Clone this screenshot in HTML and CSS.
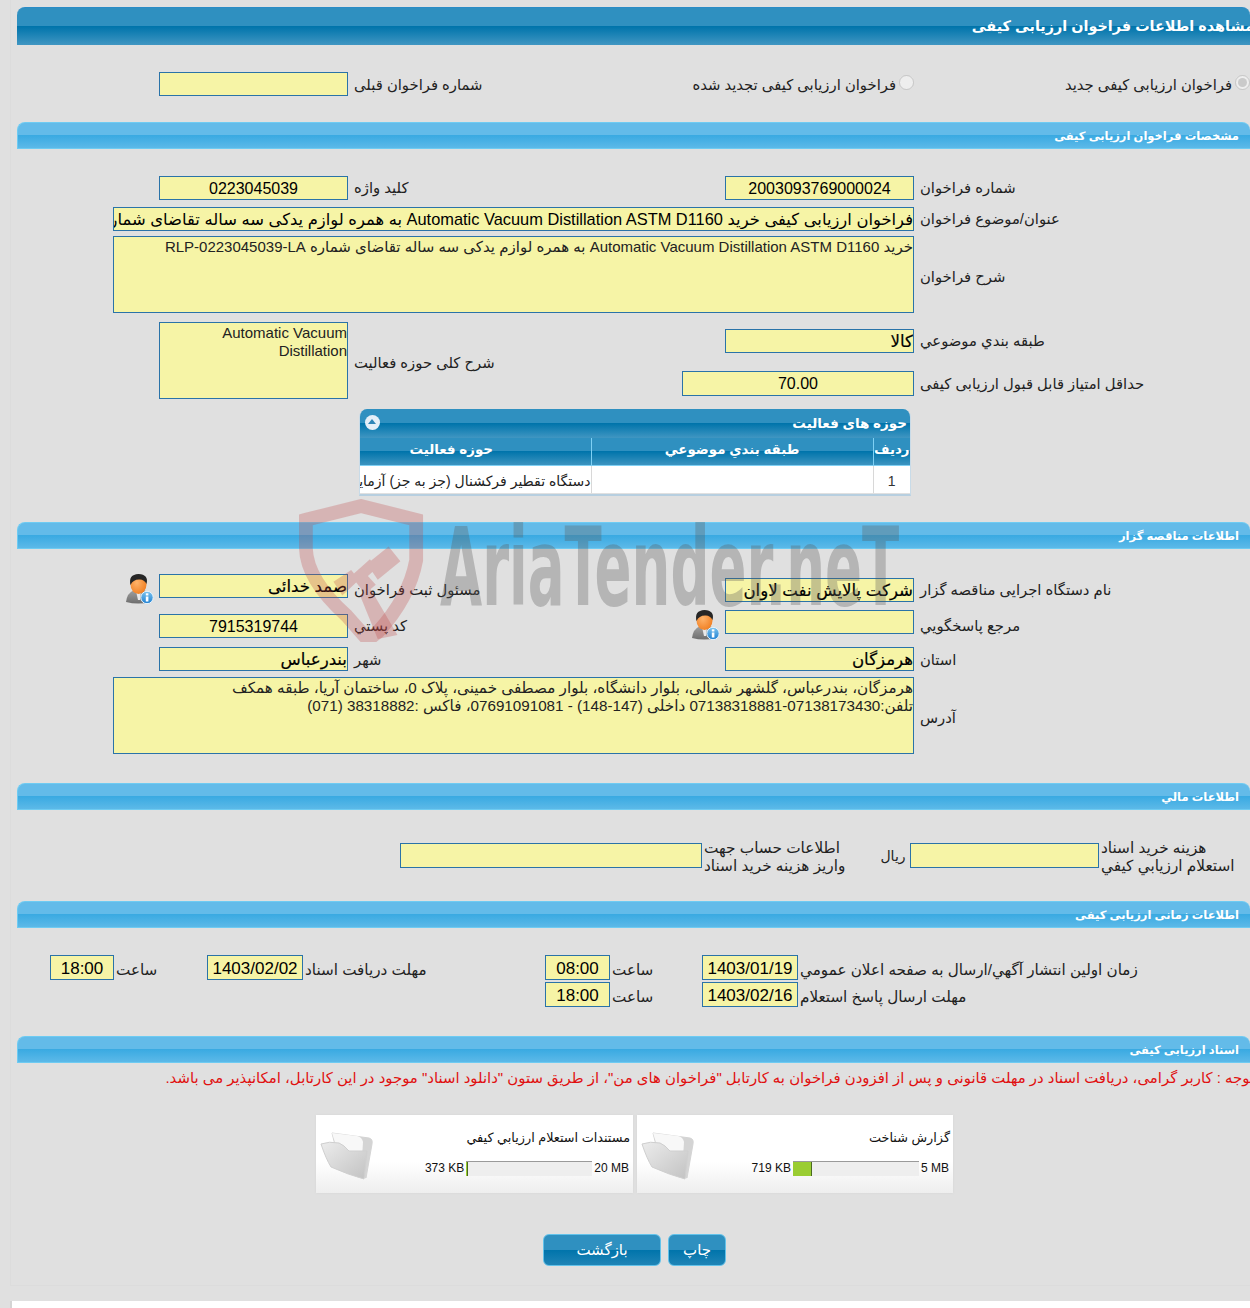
FILE: index.html
```html
<!DOCTYPE html>
<html lang="fa">
<head>
<meta charset="utf-8">
<title>مشاهده اطلاعات فراخوان ارزیابی کیفی</title>
<link rel="stylesheet" href="styles.css">
</head>
<body>
<div class="page">
<main class="panel">
  <h1 class="bar-main" dir="rtl"><span>مشاهده اطلاعات فراخوان ارزیابی کیفی</span></h1>

  <div class="row mt-27 h-24">
    <input class="field col-c" readonly>
    <label class="label pad2 col-d">شماره فراخوان قبلی</label>
    <div class="radio col-wide-de" dir="rtl"><input type="radio" disabled><span>فراخوان ارزیابی کیفی تجدید شده</span></div>
    <div class="radio col-f" dir="rtl"><input type="radio" disabled checked><span>فراخوان ارزیابی کیفی جدید</span></div>
  </div>

  <h2 class="bar mt-26" dir="rtl">مشخصات فراخوان ارزیابی کیفی</h2>

  <div class="row mt-27 h-24">
    <input class="field col-c center" dir="rtl" readonly value="0223045039">
    <label class="label col-d">کلید واژه</label>
    <input class="field col-e center" dir="rtl" readonly value="2003093769000024">
    <label class="label col-f">شماره فراخوان</label>
  </div>
  <div class="row mt-7 h-24">
    <input class="field col-wide long" dir="rtl" readonly value="فراخوان ارزیابی کیفی خرید Automatic Vacuum Distillation ASTM D1160 به همره لوازم یدکی سه ساله تقاضای شماره RLP-0223045039-LA">
    <label class="label col-f">عنوان/موضوع فراخوان</label>
  </div>
  <div class="row mt-5 h-77">
    <textarea class="field area col-wide" dir="rtl" readonly>خرید Automatic Vacuum Distillation ASTM D1160 به همره لوازم یدکی سه ساله تقاضای شماره RLP-0223045039-LA</textarea>
    <label class="label col-f">شرح فراخوان</label>
  </div>
  <div class="row activity mt-9">
    <textarea class="field area col-c span-rows" dir="rtl" readonly>Automatic Vacuum Distillation</textarea>
    <label class="label col-d span-rows">شرح کلی حوزه فعالیت</label>
    <input class="field name col-e row-2" dir="rtl" readonly value="کالا">
    <label class="label col-f row-2">طبقه بندي موضوعي</label>
    <input class="field col-de-end row-4 tall center" dir="rtl" readonly value="70.00">
    <label class="label col-f row-4">حداقل امتیاز قابل قبول ارزیابی کیفی</label>
  </div>

  <section class="grid-box">
    <div class="grid-title" dir="rtl"><span>حوزه های فعالیت</span><i class="collapse"></i></div>
    <table class="grid-table" dir="rtl">
      <colgroup><col class="c-num"><col class="c-cat"><col></colgroup>
      <thead><tr><th>رديف</th><th>طبقه بندي موضوعي</th><th>حوزه فعالیت</th></tr></thead>
      <tbody><tr><td class="num">1</td><td></td><td>دستگاه تقطیر فرکشنال (جز به جز) آزمایشگاهی</td></tr></tbody>
    </table>
  </section>

  <h2 class="bar mt-26" dir="rtl">اطلاعات مناقصه گزار</h2>

  <div class="row mt-25 h-28">
    <svg class="person col-ab" viewBox="0 0 28 30"><use href="#person"/></svg>
    <input class="field name col-c top" dir="rtl" readonly value="صمد خدائی">
    <label class="label col-d">مسئول ثبت فراخوان</label>
    <input class="field name col-e bottom" dir="rtl" readonly value="شرکت پالایش نفت لاوان">
    <label class="label col-f">نام دستگاه اجرایی مناقصه گزار</label>
  </div>
  <div class="row mt-8 h-28">
    <input class="field col-c bottom center" dir="rtl" readonly value="7915319744">
    <label class="label col-d">کد پستي</label>
    <svg class="person col-d-end" viewBox="0 0 28 30"><use href="#person"/></svg>
    <input class="field col-e top" dir="rtl" readonly>
    <label class="label col-f">مرجع پاسخگويي</label>
  </div>
  <div class="row mt-9 h-24">
    <input class="field name col-c" dir="rtl" readonly value="بندرعباس">
    <label class="label pad2 col-d">شهر</label>
    <input class="field name col-e" dir="rtl" readonly value="هرمزگان">
    <label class="label pad2 col-f">استان</label>
  </div>
  <div class="row mt-6 h-77">
    <textarea class="field area address col-wide" dir="rtl" readonly>هرمزگان، بندرعباس، گلشهر شمالی، بلوار دانشگاه، بلوار مصطفی خمینی، پلاک 0، ساختمان آریا، طبقه همکف
تلفن:07138173430-07138318881 داخلی (147-148) - 07691091081، فاکس :38318882 (071)</textarea>
    <label class="label col-f">آدرس</label>
  </div>

  <h2 class="bar mt-29" dir="rtl">اطلاعات مالي</h2>

  <div class="finance">
    <input class="field f-account" readonly>
    <label class="f-label f-label-account" dir="rtl">اطلاعات حساب جهت<br>واریز هزینه خرید اسناد</label>
    <span class="rial">ريال</span>
    <input class="field f-cost" readonly>
    <label class="f-label" dir="rtl">هزینه خرید اسناد<br>استعلام ارزیابي کیفي</label>
  </div>

  <h2 class="bar mt-24" dir="rtl">اطلاعات زمانی ارزیابی کیفی</h2>

  <div class="times">
    <input class="field t-left-time center" readonly value="18:00">
    <label class="label t-l1">ساعت</label>
    <input class="field t-left-date center" readonly value="1403/02/02">
    <label class="label t-l2">مهلت دریافت اسناد</label>
    <input class="field t-time center" readonly value="08:00">
    <label class="label t-l3">ساعت</label>
    <input class="field t-date center" readonly value="1403/01/19">
    <label class="label t-l4">زمان اولین انتشار آگهي/ارسال به صفحه اعلان عمومي</label>
    <input class="field t-time r2 center" readonly value="18:00">
    <label class="label t-l3 r2">ساعت</label>
    <input class="field t-date r2 center" readonly value="1403/02/16">
    <label class="label t-l4 r2">مهلت ارسال پاسخ استعلام</label>
  </div>

  <h2 class="bar mt-29" dir="rtl">اسناد ارزیابی کیفی</h2>

  <p class="notice" dir="rtl"><span>توجه : کاربر گرامی، دریافت اسناد در مهلت قانونی و پس از افزودن فراخوان به کارتابل "فراخوان های من"، از طریق ستون "دانلود اسناد" موجود در این کارتابل، امکانپذیر می باشد.</span></p>

  <div class="files">
    <article class="file">
      <svg class="folder" viewBox="0 0 56 50"><use href="#folder"/></svg>
      <div class="file-body">
        <div class="file-title" dir="rtl">مستندات استعلام ارزیابي کیفي</div>
        <div class="meter-row"><span>373 KB</span><div class="meter"><i class="meter-fill" style="width:2px"></i></div><span>20 MB</span></div>
      </div>
    </article>
    <article class="file">
      <svg class="folder" viewBox="0 0 56 50"><use href="#folder"/></svg>
      <div class="file-body">
        <div class="file-title" dir="rtl">گزارش شناخت</div>
        <div class="meter-row"><span>719 KB</span><div class="meter"><i class="meter-fill" style="width:19px"></i></div><span>5 MB</span></div>
      </div>
    </article>
  </div>

  <div class="actions">
    <button class="btn wide" type="button">بازگشت</button>
    <button class="btn" type="button">چاپ</button>
  </div>
</main>
<div class="after"></div>

<div class="watermark" aria-hidden="true">
  <svg class="shield" viewBox="0 0 130 145">
    <path class="shield-line" d="M7 21 L63 7 L119 21 L119 62 Q112 100 80 135 L70 143 L48 118 Q8 82 7 50 Z"/>
    <path class="shield-fill" d="M69 66 L91 48 L103 63 L80 82 Z M53 78 L72 61 L79 70 L70 78 L78 87 L67 96 Z M35 84 L53 72 L61 82 L44 98 Z M62 98 L72 90 L100 138 L80 142 Z"/>
  </svg>
  <span class="wm-text">AriaTender.neT</span>
</div>
</div>

<svg class="defs" aria-hidden="true">
  <defs>
    <linearGradient id="suit" x1="0" y1="0" x2="0" y2="1"><stop offset="0" stop-color="#a0a0a0"/><stop offset="1" stop-color="#6e6e6e"/></linearGradient>
    <radialGradient id="face" cx=".4" cy=".4" r=".7"><stop offset="0" stop-color="#ffb36a"/><stop offset="1" stop-color="#ef7b1d"/></radialGradient>
    <linearGradient id="info" x1="0" y1="0" x2="0" y2="1"><stop offset="0" stop-color="#7cc4f0"/><stop offset="1" stop-color="#1f7fd0"/></linearGradient>
    <linearGradient id="fold" x1="0" y1="0" x2="1" y2="1"><stop offset="0" stop-color="#ececec"/><stop offset="1" stop-color="#c2c2c2"/></linearGradient>
    <symbol id="person" viewBox="0 0 28 30">
      <path d="M0 28 Q1 19 8 16 L18 16 Q24 18 25 28 Q12 31 0 28 Z" fill="url(#suit)"/>
      <path d="M10 17 L15 17 L14 26 L12 26 Z" fill="#e8e8e8"/>
      <ellipse cx="12.5" cy="10.5" rx="8" ry="9.5" fill="url(#face)"/>
      <path d="M4.5 11 Q2 0.5 12.5 0 Q23 0.5 20.5 10 Q18 5 13 5.5 Q7 5.5 4.5 11 Z" fill="#262626"/>
      <circle cx="21" cy="23.5" r="6.2" fill="url(#info)" stroke="#e8f4fc"/>
      <rect x="19.8" y="22.5" width="2.6" height="5" fill="#fff"/>
      <rect x="19.8" y="19.3" width="2.6" height="2.2" fill="#fff"/>
    </symbol>
    <symbol id="folder" viewBox="0 0 56 50">
      <path d="M13 2 L50 7 Q54 8 53 13 L47 47 L20 30 Z" fill="#d4d4d4" stroke="#d4d4d4" stroke-linejoin="round"/>
      <path d="M13 2 L38 5 Q43 6 44 11 L43 26 L20 24 Z" fill="#f8f8f8"/>
      <path d="M2 13 Q10 10 20 12 Q25 14 30 20 L48 20 L45 48 Q30 44 12 36 Q7 28 2 13 Z" fill="url(#fold)" stroke="#cfcfcf" stroke-linejoin="round"/>
    </symbol>
  </defs>
</svg>
</body>
</html>
```
FILE: styles.css
```css
* { box-sizing: border-box; }
html, body { margin: 0; padding: 0; background: #e0e0e0; }
body {
  width: 1250px;
  height: 1308px;
  overflow: hidden;
  font-family: "Liberation Sans", "DejaVu Sans", sans-serif;
  font-size: 14px;
  color: #222;
}
.page { position: relative; width: 1250px; height: 1308px; overflow: hidden; }
.panel {
  margin-left: 10px;
  width: 1240px;
  padding: 7px 0 19px 6px;
  border-left: 1px solid #dcdcdc;
  border-bottom: 1px solid #dcdcdc;
  border-top: 1px solid #dcdcdc;
  margin-top: -1px;
}
.after {
  margin: 15px 0 0 10px;
  height: 40px;
  background: #fff;
  border-left: 2px solid #d4d4d4;
}
.defs { position: absolute; width: 0; height: 0; }

/* bars */
.bar-main {
  margin: 0;
  height: 38px;
  border-top: 1px solid #2a8cc6;
  border-radius: 8px 8px 0 0;
  background: linear-gradient(#2f90c0 0, #2f90c0 49%, #0074ab 50%, #4096c2 100%);
  color: #fff;
  font-size: 14.4px;
  font-weight: bold;
  line-height: 36px;
  white-space: nowrap;
  overflow: visible;
}
.bar-main span { margin-right: -4px; display: inline-block; }
.bar {
  margin: 0;
  height: 27px;
  border-top: 1px solid #6ecbf2;
  border-bottom: 1px solid #6ecbf2;
  border-left: 1px solid #6ecbf2;
  border-radius: 8px 8px 0 0;
  background: linear-gradient(#63bbe9 0, #63bbe9 49%, #3aaae2 50%, #5cb9e8 100%);
  color: #fff;
  font-size: 11.5px;
  font-weight: bold;
  line-height: 26px;
  padding-right: 11px;
  white-space: nowrap;
}
.mt-5 { margin-top: 5px; } .mt-6 { margin-top: 6px; } .mt-7 { margin-top: 7px; }
.mt-8 { margin-top: 8px; } .mt-9 { margin-top: 9px; } .mt-24 { margin-top: 24px; } .mt-25 { margin-top: 25px; }
.mt-26 { margin-top: 26px; } .mt-27 { margin-top: 27px; } .mt-29 { margin-top: 29px; }

/* form rows */
.row {
  display: grid;
  grid-template-columns: 96px 46px 189px 377px 189px 1fr;
  grid-template-rows: 100%;
  align-items: center;
}
.row > * { grid-row: 1; }
.h-24 { height: 24px; } .h-28 { height: 28px; } .h-77 { height: 77px; }
.field {
  display: block;
  width: 100%;
  height: 24px;
  margin: 0;
  padding: 1px 0 0;
  background: #f6f4a6;
  border: 1px solid #2a73a8;
  border-radius: 0;
  outline: none;
  font-family: inherit;
  font-size: 16px;
  color: #000;
  text-align: right;
  overflow: hidden;
  white-space: nowrap;
}
.field.center { text-align: center; }
.field.long { font-size: 16.4px; }
.field.name { font-size: 16.6px; -webkit-text-stroke: .2px #000; }
.area {
  height: 77px;
  padding-top: 1px;
  font-size: 15px;
  line-height: 18px;
  color: #222;
  resize: none;
  white-space: pre-wrap;
}
.address { font-size: 15.2px; }
.top { align-self: start; }
.bottom { align-self: end; }
.label {
  padding: 0 0 0 6px;
  font-size: 14.8px;
  line-height: 18px;
  white-space: nowrap;
  direction: rtl;
  text-align: left;
  color: #222;
}
.label.pad2 { padding-top: 2px; }
.h-28 .label { padding-top: 4px; }
.h-77 .label, .label.span-rows { padding-top: 4px; }
.col-ab { grid-column: 1 / 3; justify-self: end; margin-right: 5px; }
.col-c { grid-column: 3; }
.col-d { grid-column: 4; }
.col-d-end { grid-column: 4; justify-self: end; margin-right: 5px; }
.col-e { grid-column: 5; }
.col-f { grid-column: 6; }
.col-wide { grid-column: 2 / 6; }
.col-wide-de { grid-column: 4 / 6; }
.col-de-end { grid-column: 4 / 6; justify-self: end; width: 232px; }
.activity { grid-template-rows: 7px 24px 18px 25px 3px; height: 77px; }
.span-rows { grid-row: 1 / -1; }
.row-2 { grid-row: 2; }
.row-4 { grid-row: 4; }
.tall { height: 25px; }
.person { width: 28px; height: 30px; align-self: start; }
.radio { display: flex; align-items: center; gap: 3px; font-size: 14.8px; white-space: nowrap; }
.radio input { width: 15px; height: 15px; margin: -4px 0 0 0; flex: none; }

/* activity table */
.grid-box {
  margin: 10px 0 0 342px;
  width: 552px;
  height: 87px;
  border-radius: 8px 8px 0 0;
  border-bottom: 2px solid #b7cfe0;
  border-left: 1px solid #c8dbe8;
  border-right: 1px solid #c8dbe8;
  overflow: hidden;
}
.grid-title {
  display: flex;
  justify-content: space-between;
  align-items: center;
  height: 29px;
  padding: 0 3px 2px 5px;
  background: linear-gradient(#2f90c0 0, #2f90c0 49%, #0074ab 50%, #4096c2 100%);
  color: #fff;
  font-size: 13.5px;
  font-weight: bold;
}
.collapse {
  width: 15px;
  height: 15px;
  border-radius: 50%;
  background: #e4eff8;
  position: relative;
}
.collapse::after {
  content: "";
  position: absolute;
  left: 3px;
  top: 4px;
  border: 4.5px solid transparent;
  border-top: 0;
  border-bottom: 5px solid #2f86b8;
}
.grid-table {
  width: 100%;
  table-layout: fixed;
  border-collapse: collapse;
  background: #fff;
}
.c-num { width: 37px; }
.c-cat { width: 282px; }
.grid-table th {
  height: 27px;
  padding: 0 0 3px;
  border-left: 1px solid #7fd0f4;
  border-bottom: 1px solid #7fd0f4;
  background: linear-gradient(#2f90c0 0, #2f90c0 49%, #0074ab 50%, #3c94c0 100%);
  color: #fff;
  font-size: 13.4px;
  font-weight: bold;
  white-space: nowrap;
}
.grid-table th:last-child { border-left: 0; padding-right: 48px; }
.grid-table td {
  height: 28px;
  padding: 4px 0 0;
  border-left: 1px solid #d8d8d8;
  color: #222;
  font-size: 14px;
  white-space: nowrap;
  overflow: hidden;
}
.grid-table td:last-child { border-left: 0; }
.grid-table .num { text-align: center; color: #333; }

/* finance */
.finance {
  display: flex;
  align-items: flex-start;
  height: 38px;
  margin: 29px 0 0 383px;
}
.f-account { width: 302px; height: 25px; flex: none; margin-top: 4px; }
.f-cost { width: 189px; height: 25px; flex: none; margin-top: 4px; }
.f-label { padding-left: 2px; text-align: left; font-size: 15.3px; line-height: 18px; white-space: nowrap; color: #222; }
.f-label-account { width: 178px; }
.rial { width: 30px; padding: 9px 4px 0 0; font-size: 14px; direction: rtl; text-align: center; }

/* times */
.times {
  display: grid;
  grid-template-columns: 33px 64px 93px 96px 242px 65px 92px 96px 1fr;
  grid-template-rows: 25px 25px;
  row-gap: 2px;
  margin-top: 27px;
  align-items: center;
}
.times .field { height: 25px; font-size: 17px; padding-top: 3px; }
.times .label { font-size: 15.2px; padding: 4px 0 0 2px; }
.t-left-time { grid-column: 2; grid-row: 1; }
.t-l1 { grid-column: 3; grid-row: 1; }
.t-left-date { grid-column: 4; grid-row: 1; }
.t-l2 { grid-column: 5; grid-row: 1; }
.t-time { grid-column: 6; grid-row: 1; }
.t-l3 { grid-column: 7; grid-row: 1; }
.t-date { grid-column: 8; grid-row: 1; }
.t-l4 { grid-column: 9; grid-row: 1; }
.times .r2 { grid-row: 2; }

/* notice + files */
.notice {
  margin: 6px 0 0;
  height: 18px;
  line-height: 18px;
  color: #e01010;
  font-size: 14.9px;
  white-space: nowrap;
}
.notice span { margin-right: -4px; display: inline-block; }
.files {
  display: flex;
  gap: 4px;
  margin: 28px 0 0 299px;
}
.file {
  display: flex;
  width: 317px;
  height: 78px;
  padding: 3px 4px 0 3px;
  background: linear-gradient(#fff 0, #fff 60%, #eeeeee 100%);
  box-shadow: 0 0 2px #d4d4d4;
}
.file + .file { width: 316px; }
.folder { width: 56px; height: 50px; margin-top: 13px; flex: none; }
.file-body { flex: 1; display: flex; flex-direction: column; align-items: flex-end; }
.file-title { margin: 11px -1px 0 0; font-size: 12.8px; line-height: 18px; white-space: nowrap; color: #111; }
.meter-row { display: flex; align-items: center; gap: 2px; margin-top: 14px; font-size: 12px; color: #111; line-height: 15px; }
.meter {
  width: 126px;
  height: 15px;
  background: #eeeeee;
  border-top: 1px solid #9a9a9a;
}
.meter-fill {
  display: block;
  height: 14px;
  background: #9acd32;
  border-right: 1px solid #4a6a20;
}

/* buttons */
.actions {
  display: flex;
  gap: 7px;
  margin: 41px 0 0 526px;
}
.btn {
  width: 58px;
  height: 32px;
  padding: 0;
  border: 1px solid #62c2ea;
  border-radius: 6px;
  background: linear-gradient(#2f90c0 0, #2f90c0 49%, #0074ab 50%, #1f84b6 100%);
  color: #fff;
  font-family: inherit;
  font-size: 15px;
}
.btn.wide { width: 118px; }

/* watermark */
.watermark {
  position: absolute;
  left: 299px;
  top: 499px;
  width: 620px;
  height: 150px;
  pointer-events: none;
}
.shield { position: absolute; left: 0; top: 0; width: 128px; height: 143px; }
.shield-line { fill: none; stroke: rgba(190, 70, 70, .28); stroke-width: 14; }
.shield-fill { fill: rgba(190, 70, 70, .28); }
.wm-text {
  position: absolute;
  left: 141px;
  top: 14px;
  font-family: "DejaVu Sans", sans-serif;
  font-weight: bold;
  font-size: 108px;
  line-height: 110px;
  color: rgba(90, 90, 90, .32);
  white-space: nowrap;
  transform: scaleX(.505);
  transform-origin: 0 0;
}
```
